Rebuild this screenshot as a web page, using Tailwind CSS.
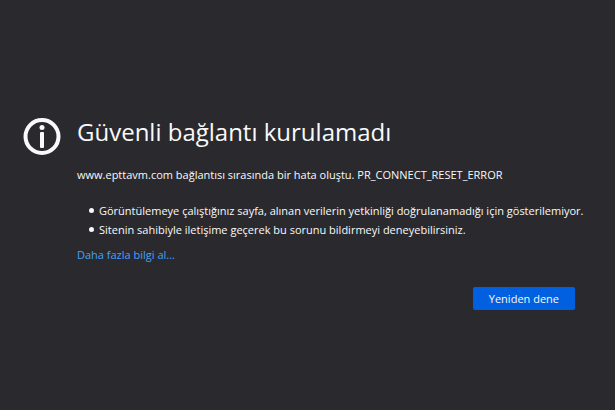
<!DOCTYPE html>
<html lang="tr">

<head>
  <meta charset="UTF-8">
  <meta name="viewport" content="width=device-width, initial-scale=1.0">
  <title>Güvenli bağlantı kurulamadı</title>

  <script src="https://cdn.jsdelivr.net/npm/@tailwindcss/browser@4"></script>
</head>

<body class="min-h-screen flex flex-col justify-center bg-[#2a2a2e] text-[#f9f9fa] font-['Open_Sans','Noto_Sans',sans-serif] text-[11px] leading-5">
  <main class="flex gap-4 pl-[23px] pr-6 pt-[14px]">
    <svg class="size-[38px] shrink-0 mt-1" viewBox="0 0 38 38" fill="none" aria-hidden="true">
      <circle cx="19" cy="18.5" r="16.5" stroke="#f9f9fa" stroke-width="4" />
      <circle cx="19" cy="9.5" r="2.5" fill="#f9f9fa" />
      <rect x="17" y="14" width="4" height="16" rx="1" fill="#f9f9fa" />
    </svg>

    <div class="flex-1 min-w-0">
      <h1 class="text-2xl leading-9">Güvenli bağlantı kurulamadı</h1>
      <p class="mt-[15px]">www.epttavm.com bağlantısı sırasında bir hata oluştu. PR_CONNECT_RESET_ERROR</p>

      <ul class="mt-4 pl-3 leading-[19px] whitespace-nowrap">
        <li class="flex items-center gap-[5px] before:size-[5px] before:rounded-full before:bg-[#f9f9fa]">Görüntülemeye çalıştığınız sayfa, alınan verilerin yetkinliği doğrulanamadığı için gösterilemiyor.</li>
        <li class="flex items-center gap-[5px] before:size-[5px] before:rounded-full before:bg-[#f9f9fa]">Sitenin sahibiyle iletişime geçerek bu sorunu bildirmeyi deneyebilirsiniz.</li>
      </ul>
      <a href="#" class="block mt-[6px] text-[#45a1ff]">Daha fazla bilgi al…</a>

      <div class="flex justify-end mt-[22px] pr-4">
        <button type="button" class="h-[23px] px-4 rounded-xs bg-[#0060df]">Yeniden dene</button>
      </div>
    </div>
  </main>
</body>

</html>
